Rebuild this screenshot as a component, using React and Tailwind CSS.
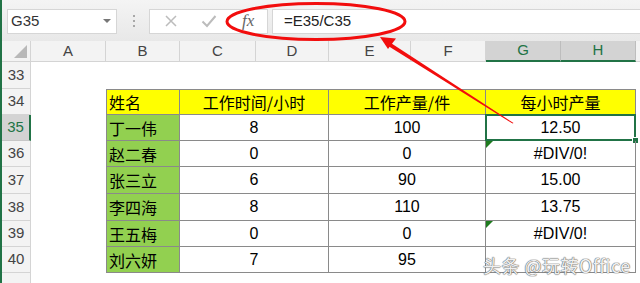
import React from 'react';

const cols = [29, 75, 74, 76, 73, 82, 75, 75, 75];
const rowH = { 33: 27, 34: 26, 35: 26, 36: 26, 37: 27, 38: 27, 39: 26, 40: 26 };

const data = [
  { r: 35, name: '丁一伟', h: '8', p: '100', v: '12.50' },
  { r: 36, name: '赵二春', h: '0', p: '0', v: '#DIV/0!', err: true },
  { r: 37, name: '张三立', h: '6', p: '90', v: '15.00' },
  { r: 38, name: '李四海', h: '8', p: '110', v: '13.75' },
  { r: 39, name: '王五梅', h: '0', p: '0', v: '#DIV/0!', err: true },
  { r: 40, name: '刘六妍', h: '7', p: '95', v: '' },
];

const cjk = "font-['Noto_Sans_CJK_SC',sans-serif]";
const lat = "font-['Liberation_Sans','Noto_Sans_CJK_SC',sans-serif]";

function RowHead({ n, active }) {
  return (
    <div
      className={`flex items-center justify-center text-[15px] ${lat} border-b border-r ${
        active ? 'bg-[#d3d3d3] text-[#217346] border-b-[#c6c6c6] border-r-2 border-r-[#217346]' : 'bg-[#f3f3f3] text-[#444] border-[#d4d4d4]'
      }`}
      style={{ height: rowH[n] }}
    >
      {n}
    </div>
  );
}

function ErrTri() {
  return <span className="absolute left-0 top-0 w-0 h-0 border-t-[7px] border-t-[#1e7b1e] border-r-[7px] border-r-transparent" />;
}

export default function App() {
  const cell = 'border-r border-b border-[#8a8a8a] flex items-center';
  return (
    <div className={`relative w-[640px] h-[283px] overflow-hidden bg-white flex ${lat}`}>
      <div className="w-[2px] bg-[#217346]" />
      <div className="flex-1 flex flex-col">
        {/* barra de fórmulas */}
        <div className="h-[45px] bg-gradient-to-b from-[#f4f4f4] to-[#e8e8e8] flex items-center pt-[1px]">
          <div className="ml-[5px] w-[110px] h-[25px] bg-white border border-[#d6d6d6] flex items-center justify-between pl-[3px] pr-[5px]">
            <span className="text-[15px] text-[#333]">G35</span>
            <span className="w-0 h-0 border-l-[4px] border-r-[4px] border-t-[4px] border-l-transparent border-r-transparent border-t-[#777]" />
          </div>
          <div className="ml-[16px] flex flex-col gap-[3px]">
            <span className="w-[2px] h-[2px] bg-[#a8a8a8]" />
            <span className="w-[2px] h-[2px] bg-[#a8a8a8]" />
            <span className="w-[2px] h-[2px] bg-[#a8a8a8]" />
          </div>
          <div className="ml-[14px] w-[119px] h-[25px] bg-white border border-[#d6d6d6] flex items-center">
            <svg width="14" height="14" viewBox="0 0 14 14" className="ml-[14px]">
              <path d="M2 2 L12 12 M12 2 L2 12" stroke="#bcbcbc" strokeWidth="1.5" fill="none" />
            </svg>
            <svg width="16" height="14" viewBox="0 0 16 14" className="ml-[23px]">
              <path d="M1.5 7.5 L6 12 L14.5 2" stroke="#bcbcbc" strokeWidth="2" fill="none" />
            </svg>
            <span className="ml-[25px] text-[17px] italic text-[#666] font-['Liberation_Serif',serif]">fx</span>
          </div>
          <div className="ml-[4px] flex-1 h-[25px] bg-white border-y border-l border-[#d6d6d6] flex items-center pl-[11px]">
            <span className="text-[15px] text-[#222]">=E35/C35</span>
          </div>
        </div>

        {/* encabezados de columnas */}
        <div className="flex h-[21px]">
          <div className="bg-[#f3f3f3] border-r border-b border-[#d4d4d4] relative" style={{ width: cols[0] }}>
            <span className="absolute right-[3px] bottom-[3px] w-0 h-0 border-l-[13px] border-l-transparent border-b-[13px] border-b-[#b8b8b8]" />
          </div>
          {['A', 'B', 'C', 'D', 'E', 'F', 'G', 'H'].map((c, i) => {
            const sel = c === 'G' || c === 'H';
            return (
              <div
                key={c}
                className={`flex items-center justify-center text-[15px] border-r ${
                  sel ? 'bg-[#d3d3d3] text-[#217346] border-[#bdbdbd] border-b-2 border-b-[#217346]' : 'bg-[#f3f3f3] text-[#444] border-[#d4d4d4] border-b border-b-[#d4d4d4]'
                }`}
                style={{ width: cols[i + 1] }}
              >
                {c}
              </div>
            );
          })}
          <div className="flex-1 bg-[#f3f3f3] border-b border-[#d4d4d4]" />
        </div>

        {/* hoja */}
        <div className="flex">
          <div className="flex flex-col" style={{ width: cols[0] }}>
            {[33, 34, 35, 36, 37, 38, 39, 40].map((n) => (
              <RowHead key={n} n={n} active={n === 35} />
            ))}
            <div className="h-[10px] bg-[#f3f3f3] border-r border-[#d4d4d4]" />
          </div>
          <div className="flex flex-col" style={{ width: cols[1] }} />
          <div className="flex flex-col">
            <div style={{ height: rowH[33] }} />
            {/* fila 34 */}
            <div className="flex text-[16px] text-black" style={{ height: rowH[34] }}>
              <div className={`${cell} border-t border-l bg-[#ffff00] pl-[2px] ${cjk}`} style={{ width: cols[2] }}>姓名</div>
              <div className={`${cell} border-t bg-[#ffff00] justify-center ${cjk}`} style={{ width: cols[3] + cols[4] }}>工作时间/小时</div>
              <div className={`${cell} border-t bg-[#ffff00] justify-center ${cjk}`} style={{ width: cols[5] + cols[6] }}>工作产量/件</div>
              <div className={`${cell} border-t bg-[#ffff00] justify-center ${cjk}`} style={{ width: cols[7] + cols[8] }}>每小时产量</div>
            </div>
            {data.map((d) => (
              <div key={d.r} className="flex text-[16px] text-black" style={{ height: rowH[d.r] }}>
                <div className={`${cell} border-l bg-[#92d050] pl-[2px] ${cjk}`} style={{ width: cols[2] }}>{d.name}</div>
                <div className={`${cell} justify-center`} style={{ width: cols[3] + cols[4] }}>{d.h}</div>
                <div className={`${cell} justify-center`} style={{ width: cols[5] + cols[6] }}>{d.p}</div>
                <div className={`${cell} justify-center relative`} style={{ width: cols[7] + cols[8] }}>
                  {d.err && <ErrTri />}
                  {d.v}
                  {d.r === 35 && (
                    <>
                      <span className="absolute -left-[1px] -top-[1px] -right-[1px] -bottom-[1px] border-2 border-[#217346]" />
                      <span className="absolute -right-[4px] -bottom-[4px] w-[7px] h-[7px] bg-[#217346] border border-white" />
                    </>
                  )}
                </div>
              </div>
            ))}
          </div>
        </div>
      </div>

      {/* anotación roja */}
      <svg className="absolute left-0 top-0 pointer-events-none" width="640" height="283">
        <ellipse cx="316" cy="21.5" rx="89" ry="18" fill="none" stroke="#f20d0d" strokeWidth="3" />
        <polygon points="513.5,123 512.5,123.5 385,44 387,40.5" fill="#f20d0d" />
        <polygon points="380,37 396,38.5 388,49" fill="#f20d0d" />
      </svg>

      {/* marca de agua */}
      <div className={`absolute left-[483px] top-[252px] text-[18px] text-white/90 tracking-[0.5px] ${cjk} [text-shadow:0_0_1px_#666,0_0_1px_#666,0_0_1px_#666]`}>
        头条 @玩转Office
      </div>
    </div>
  );
}
